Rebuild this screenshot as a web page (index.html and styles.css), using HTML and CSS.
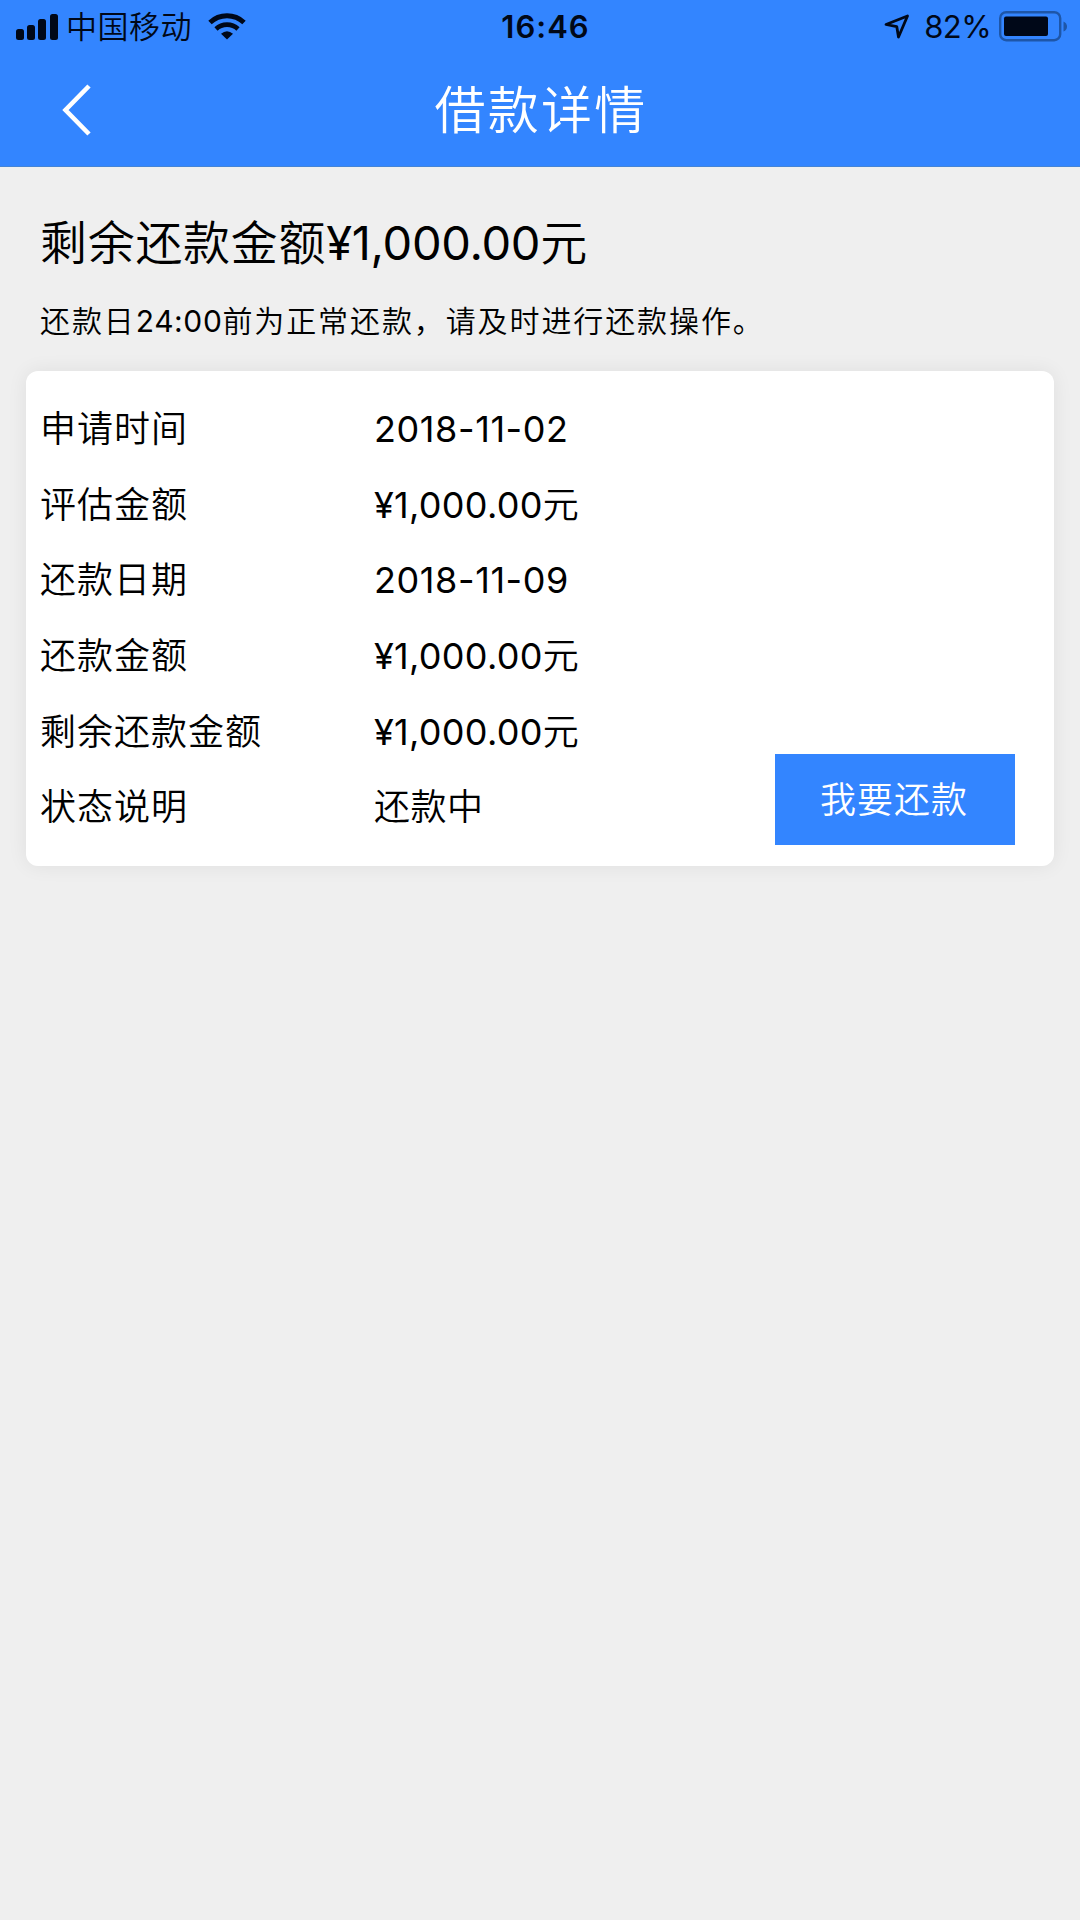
FILE: index.html
```html
<!DOCTYPE html>
<html lang="zh-CN">
<head>
    <meta charset="UTF-8">
    <meta name="viewport" content="width=device-width, initial-scale=1.0">
    <title>借款详情</title>
    <link rel="stylesheet" href="styles.css">
</head>
<body>
    <header class="header">
        <div class="status-bar">
            <div class="status-left">
                <svg class="signal" width="42" height="26" viewBox="0 0 42 26">
                    <rect x="0" y="15" width="8" height="11" rx="2.5"/>
                    <rect x="11" y="11" width="8" height="15" rx="2.5"/>
                    <rect x="22" y="5" width="8" height="21" rx="2.5"/>
                    <rect x="34" y="0" width="8" height="26" rx="2.5"/>
                </svg>
                <span class="carrier">中国移动</span>
                <svg class="wifi" width="38" height="27" viewBox="0 0 38 27">
                    <path d="M2 9.5a25 25 0 0 1 34 0" fill="none" stroke="#000818" stroke-width="5"/>
                    <path d="M8 16a16 16 0 0 1 22 0" fill="none" stroke="#000818" stroke-width="4.6"/>
                    <path d="M13 20.8Q19 15.6 25 20.8L19 26.6Z"/>
                </svg>
            </div>
            <div class="time">16:46</div>
            <div class="status-right">
                <svg class="location" width="26" height="26" viewBox="0 0 26 26">
                    <path d="M23.5 2L14.5 23L12.8 12.7L2 10.5Z" fill="none" stroke="#000818" stroke-width="2.8" stroke-linejoin="round"/>
                </svg>
                <span class="percent">82%</span>
                <svg class="battery" width="69" height="31" viewBox="0 0 69 31">
                    <rect x="1.2" y="1.2" width="60" height="28" rx="6" fill="none" stroke="#1e56a8" stroke-width="2.4"/>
                    <rect x="5" y="5.5" width="44" height="19.5" rx="2"/>
                    <path d="M64.5 10.5Q68 12 68 15.5T64.5 20.5Z" fill="#1e56a8"/>
                </svg>
            </div>
        </div>
        <div class="nav-bar">
            <a href="#" class="back">
                <svg width="30" height="52" viewBox="0 0 30 52">
                    <path d="M27 2L3.5 26L27 50" fill="none" stroke="#fff" stroke-width="4.6"/>
                </svg>
            </a>
            <h1>借款详情</h1>
        </div>
    </header>

    <div class="summary">
        <h2>剩余还款金额<span class="amount">¥1,000.00</span>元</h2>
        <p>还款日<span class="hour">24:00</span>前为正常还款，请及时进行还款操作。</p>
    </div>

    <div class="card">
        <ul class="detail-list">
            <li><span class="label">申请时间</span><span class="value"><span class="date">2018-11-02</span></span></li>
            <li><span class="label">评估金额</span><span class="value"><span class="num">¥1,000.00</span>元</span></li>
            <li><span class="label">还款日期</span><span class="value"><span class="date">2018-11-09</span></span></li>
            <li><span class="label">还款金额</span><span class="value"><span class="num">¥1,000.00</span>元</span></li>
            <li><span class="label">剩余还款金额</span><span class="value"><span class="num">¥1,000.00</span>元</span></li>
            <li><span class="label">状态说明</span><span class="value">还款中</span></li>
        </ul>
        <button type="button" class="repay-btn">我要还款</button>
    </div>
</body>
</html>
```

FILE: styles.css
```css
* {
    box-sizing: border-box;
}

body {
    font-family: Inter, "Noto Sans CJK SC", sans-serif;
    font-weight: 350;
    background-color: #efefef;
    color: #000;
    margin: 0;
    min-height: 100vh;
}

.header {
    background-color: #3385ff;
    height: 167px;
    border-bottom: 1px solid #4484d6;
}

.status-bar {
    display: grid;
    grid-template-columns: 1fr auto 1fr;
    align-items: center;
    height: 54px;
    padding: 0 12px 1px 16px;
    color: #000818;
    fill: #000818;
    line-height: 53px;
}

.status-left,
.status-right {
    display: flex;
    align-items: center;
}

.status-right {
    justify-content: flex-end;
}

.carrier {
    margin: 0 16px 0 8px;
    font-size: 31px;
    letter-spacing: 0.5px;
}

.time {
    padding-left: 7px;
    font-size: 31px;
    font-weight: 600;
    letter-spacing: 1px;
}

.percent {
    margin: 0 8px 0 14px;
    font-size: 31px;
    font-weight: 400;
    letter-spacing: -0.6px;
}

.nav-bar {
    display: grid;
    grid-template-columns: 120px 1fr 120px;
    align-items: center;
    height: 112px;
}

.back {
    display: flex;
    padding-left: 62px;
}

.nav-bar h1 {
    margin: 0;
    padding: 1px 0 0 2px;
    color: #fff;
    font-size: 51px;
    font-weight: 350;
    letter-spacing: 2.2px;
    line-height: 109px;
    text-align: center;
}

.summary {
    padding: 40px 40px 0;
}

.summary h2 {
    margin: 0;
    font-size: 47px;
    font-weight: 350;
    letter-spacing: 0.7px;
    line-height: 72px;
}

.amount,
.hour,
.num,
.date {
    font-weight: 400;
}

.amount {
    letter-spacing: -0.3px;
}

.summary p {
    margin: 16px 0 0;
    font-size: 30px;
    letter-spacing: 1.9px;
    line-height: 52px;
}

.hour {
    letter-spacing: 0.6px;
}

.card {
    display: flex;
    align-items: flex-end;
    justify-content: space-between;
    height: 495px;
    margin: 24px 26px 0;
    padding: 20px 39px 21px 14px;
    background-color: #fff;
    border-radius: 12px;
    box-shadow: 0 0 20px rgba(0,0,0,0.07);
}

.detail-list {
    align-self: flex-start;
    margin: 0;
    padding: 0;
    list-style: none;
}

.detail-list li {
    display: flex;
    height: 75.7px;
    font-size: 36px;
    line-height: 76px;
}

.label {
    width: 334px;
    letter-spacing: 1px;
}

.value {
    letter-spacing: 0.5px;
}

.num {
    letter-spacing: 0.3px;
}

.date {
    letter-spacing: 0.6px;
}

.repay-btn {
    width: 240px;
    height: 91px;
    padding: 0 2px 6px 0;
    border: none;
    background-color: #3385ff;
    color: #fff;
    font-family: inherit;
    font-size: 36px;
    font-weight: 350;
    letter-spacing: 1px;
    cursor: pointer;
}
```
